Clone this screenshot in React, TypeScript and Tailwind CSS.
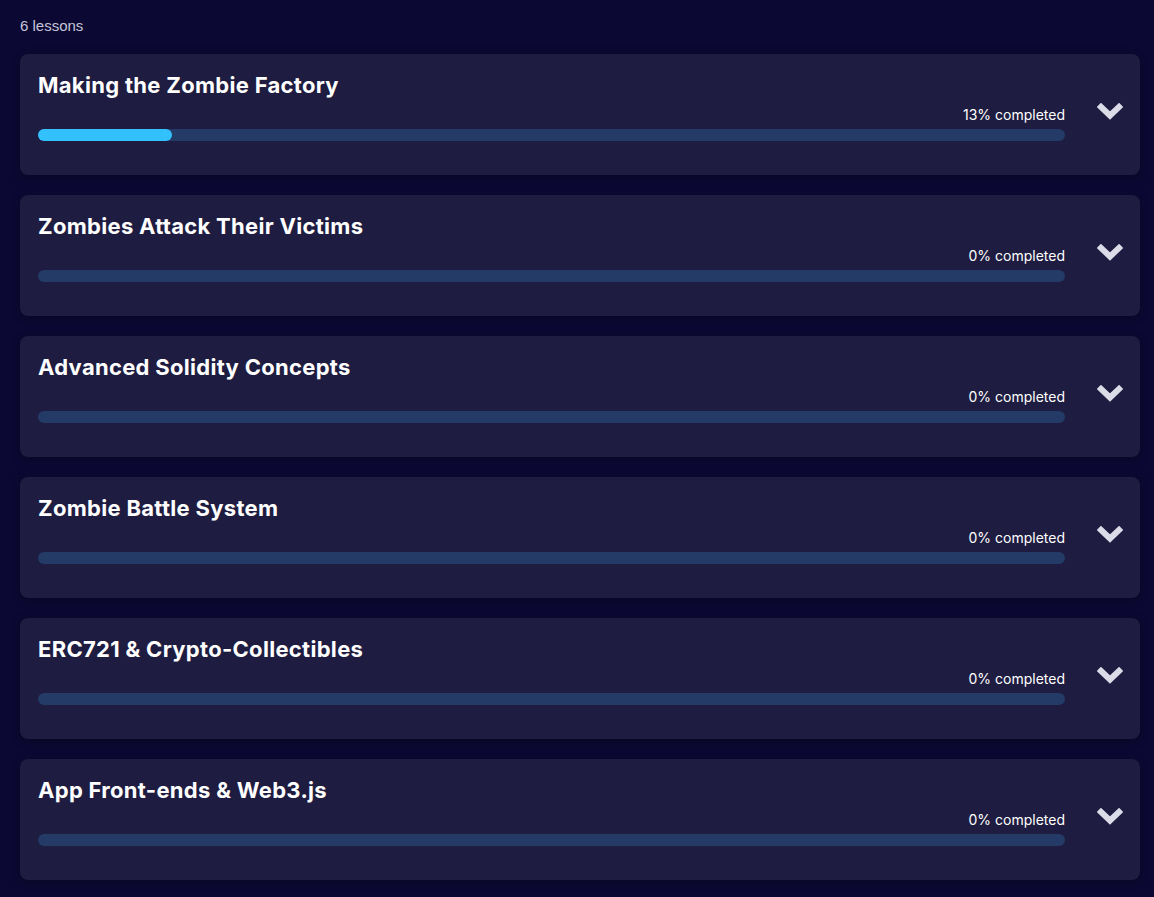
const lessons = [
  { title: "Making the Zombie Factory", progress: 13 },
  { title: "Zombies Attack Their Victims", progress: 0 },
  { title: "Advanced Solidity Concepts", progress: 0 },
  { title: "Zombie Battle System", progress: 0 },
  { title: "ERC721 & Crypto-Collectibles", progress: 0 },
  { title: "App Front-ends & Web3.js", progress: 0 },
];

function Chevron() {
  return (
    <svg width="26" height="18" viewBox="0 0 26 18" fill="none">
      <polyline
        points="4,4 13,12.5 22,4"
        stroke="#dcdbe8"
        strokeWidth="6"
        strokeLinecap="square"
        strokeLinejoin="miter"
      />
    </svg>
  );
}

export default function App() {
  return (
    <div
      className="min-h-[897px] bg-[#0b0933] pl-5 pr-[14px] pt-[16px] pb-4"
      style={{ fontFamily: "Inter, 'Noto Sans', sans-serif" }}
    >
      <p className="font-['Liberation_Sans',Arial,sans-serif] text-[15px] leading-5 text-[#c6c5d9]">
        {lessons.length} lessons
      </p>

      <div className="mt-[18px] flex flex-col gap-5">
        {lessons.map((l) => (
          <div
            key={l.title}
            className="flex h-[121px] rounded-lg bg-[#1e1c40] pl-[18px] shadow-[0_2px_8px_rgba(0,0,0,0.35)]"
          >
            <div className="flex-1 pt-[17px]">
              <h2 className="text-[22px] leading-7 font-bold tracking-[0.3px] text-white">
                {l.title}
              </h2>
              <p className="mt-[6px] text-right text-sm leading-5 text-white">
                {l.progress}% completed
              </p>
              <div className="mt-1 h-3 w-full rounded-full bg-[#233b66]">
                <div
                  className="h-3 rounded-full bg-[#33c1fd]"
                  style={{ width: `${l.progress}%` }}
                />
              </div>
            </div>
            <div className="flex w-[75px] justify-center pt-[49px] pl-[14px]">
              <div className="h-[18px]">
                <Chevron />
              </div>
            </div>
          </div>
        ))}
      </div>
    </div>
  );
}
